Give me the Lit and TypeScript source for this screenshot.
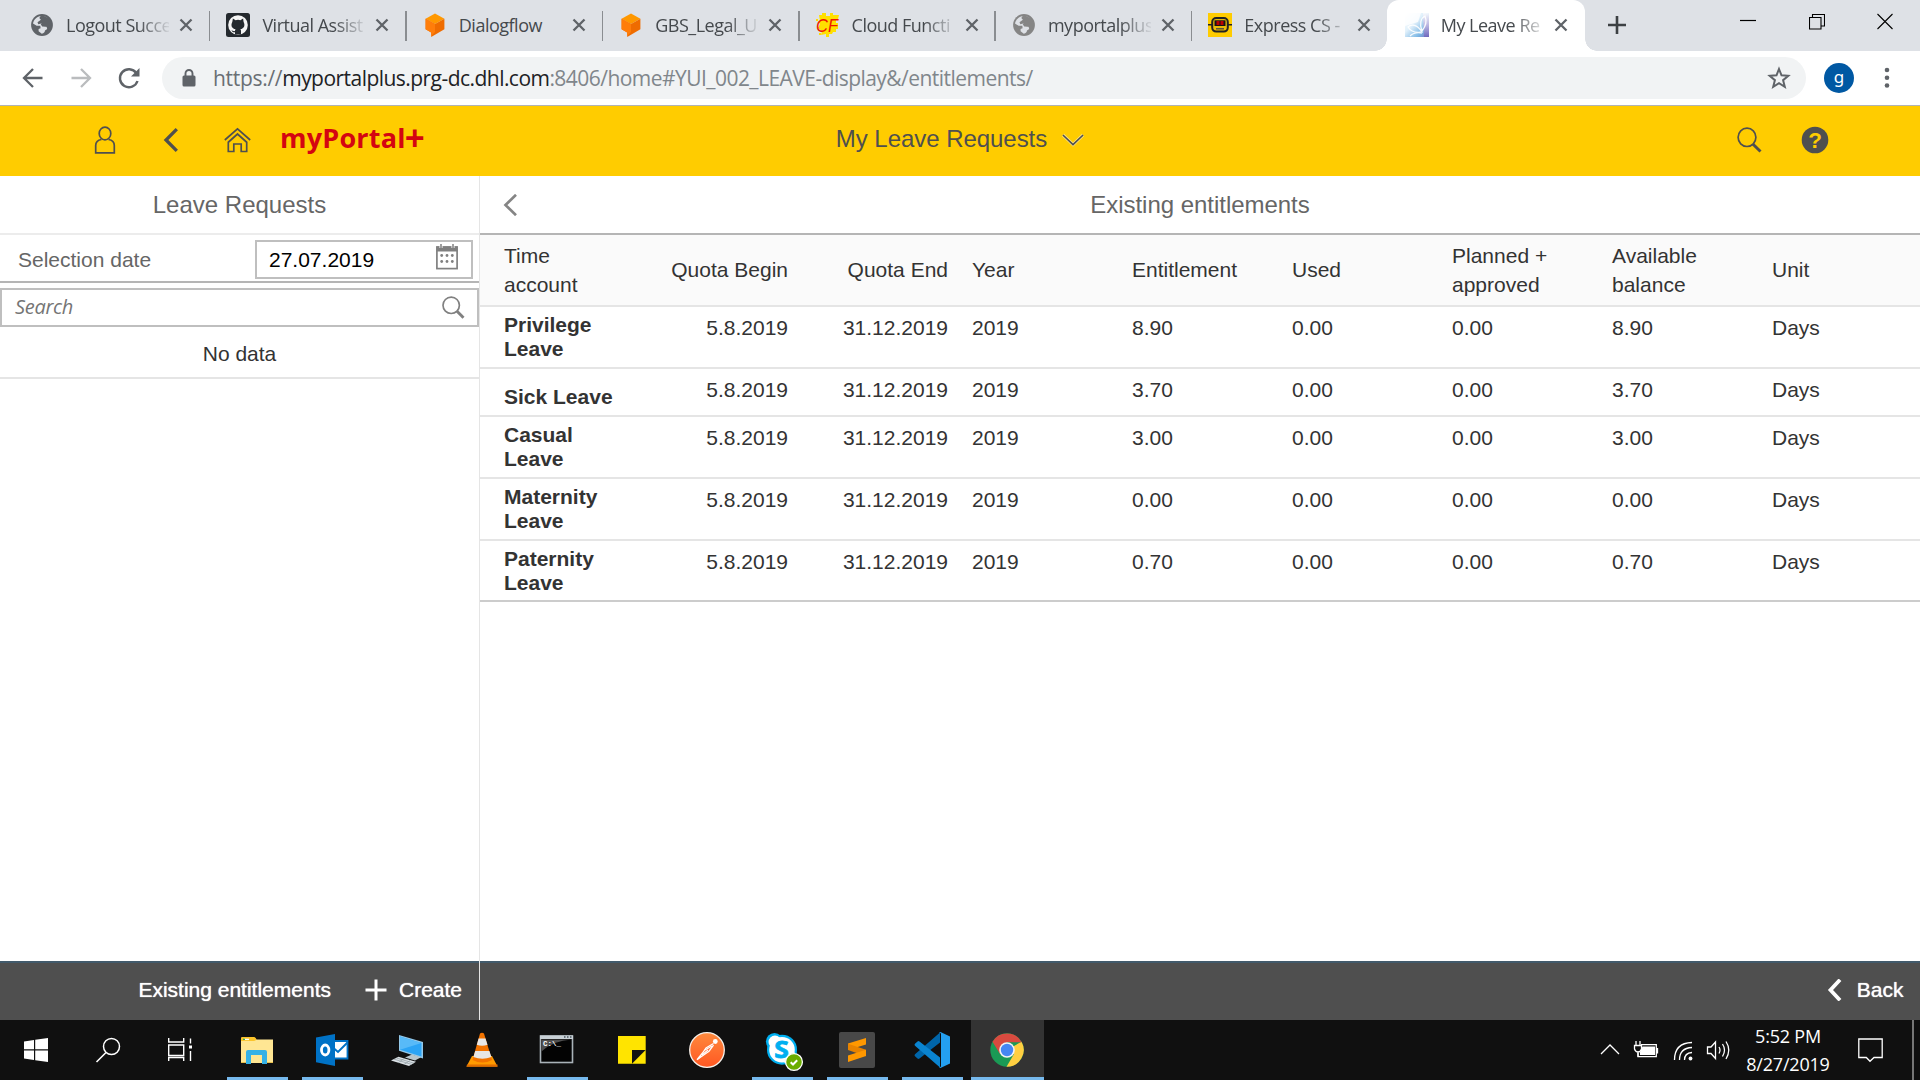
import { LitElement, html, svg, css, nothing } from "lit";
import { customElement } from "lit/decorators.js";
import { classMap } from "lit/directives/class-map.js";

const closeIcon = html`<svg class="x" width="14" height="14" viewBox="0 0 14 14"><path d="M1.5 1.5 12.5 12.5M12.5 1.5 1.5 12.5" stroke="#5f6368" stroke-width="2.3" fill="none"/></svg>`;

const globe = (color: string) => svg`
  <circle cx="12" cy="12" r="10.9" fill="${color}"/>
  <path d="M11.2 2.9C7 3.4 3.6 6.4 3 10.6l3.7 2.2h3.6l.3 2.5-2 .6v2.3l3.2 2.5c2.1-.4 3-1.3 3.2-3.1l2.2-1.5-.6-2.3-4.4-.4-1.5-2.2 1.8-1 2.8.4.6-2.3 3.2-1.6C17.6 4.3 15 3 11.2 2.9z" fill="#dee1e6"/>
  <path d="M11.5 1.8 9.3 5l1.6 1.8-3.4 2.4.8 2 3-.6 2.2 2.5 4.2.3.8 2.4-2.4 2.6 3.6-.9 2.2-5-1.5-6.4z" fill="${color}"/>`;

const dialogflow = svg`
  <path d="M12 .5 21.4 5.7 12 11 2.6 5.7z" fill="#ff9800"/>
  <path d="M2.6 5.7 12 11l9.4-5.3v10.6L8.2 24v-4.4L2.6 16.3z" fill="#ef6c00"/>
  <path d="M2.6 5.7 12 11v8l-3.8 4V19.600l-5.6-3.300z" fill="#ff7d0a"/>`;

const favicons: Record<string, unknown> = {
  globe: globe("#5f6368"),
  globeGray: globe("#858585"),
  github: svg`
    <rect width="24" height="24" rx="2.5" fill="#24292e"/>
    <circle cx="12" cy="12" r="9.8" fill="#f5f5f5"/>
    <path d="M6.900 5.500 9.600 7.200a9 9 0 0 1 4.800 0l2.700-1.700.5 3.400c1.800 3.300.6 6.700-3.300 7.200.6.700.7 1.300.7 2.200v3.300h-6v-2.400c-2 .3-2.900-.5-3.600-2 1.300 0 1.700 1.400 3.600.9 0-.9.200-1.500.6-2-3.900-.5-5.100-3.900-3.300-7.200z" fill="#24292e"/>`,
  dialogflow,
  cf: svg`
    <path d="M3 2h3V0h4v3h4V0h3v2h6l-1 4h-2v4h2v4h-2v5h-3l-1 2h-3v3h-3v-3l-5 1 1-4-4-3 2-4-2-3h2z" fill="#ffe000"/>
    <path d="M0 6h2v2H0zM20 14h2v2h-2zM3 20h2v2H3z" fill="#ffe000"/>
    <text x="0" y="19" font-family="Liberation Sans" font-size="19" fill="#f01800" textLength="22" lengthAdjust="spacingAndGlyphs" font-style="italic">CF</text>`,
  express: svg`
    <rect width="24" height="24" fill="#fc0"/>
    <path d="M0 11h24v1.500H0z" fill="#222"/>
    <rect x="4.200" y="5" width="15.600" height="13.600" rx="4" fill="#e9bb06" stroke="#222" stroke-width="2"/>
    <rect x="6.500" y="7.300" width="11" height="5.700" fill="#151515"/>
    <rect x="8.500" y="8" width="3" height="4" fill="#b00"/><rect x="12.500" y="8" width="3" height="4" fill="#b00"/>
    <path d="M8 15.800h8" stroke="#444" stroke-width="1.300"/>`,
  butterfly: svg`
    <defs>
      <linearGradient id="wing" x1="0" y1="0" x2="1" y2="1"><stop offset="0" stop-color="#fff"/><stop offset=".4" stop-color="#dff0fb"/><stop offset=".75" stop-color="#6fb0e2"/><stop offset="1" stop-color="#6a5fb8"/></linearGradient>
      <linearGradient id="edge" x1="0" y1="0" x2="0" y2="1"><stop offset="0" stop-color="#ffffff"/><stop offset=".5" stop-color="#cfb4e0"/><stop offset="1" stop-color="#6c62bb"/></linearGradient>
    </defs>
    <path d="M0 0h24v24H0z" fill="url(#wing)" opacity=".9"/>
    <path d="M18 0h6v24h-5z" fill="url(#edge)" opacity=".75"/>
    <path d="M0 0h16l-3 9-13 4z" fill="#fff" opacity=".8"/>
    <path d="M17 18C14 11 16 5 20 3c2 5 1 10-3 15zM17 19C12 11 6 11 3 14c3 5 8 6 14 5zM17 20c-5-1-9 0-12 3" fill="none" stroke="#fff" stroke-width="1.300" opacity=".9"/>`,
};

interface Tab { icon: string; label: string; active?: boolean; last?: boolean; }
const TABS: Tab[] = [
  { icon: "globe", label: "Logout Succe" },
  { icon: "github", label: "Virtual Assist" },
  { icon: "dialogflow", label: "Dialogflow" },
  { icon: "dialogflow", label: "GBS_Legal_U" },
  { icon: "cf", label: "Cloud Functi" },
  { icon: "globeGray", label: "myportalplus" },
  { icon: "express", label: "Express CS -", last: true },
  { icon: "butterfly", label: "My Leave Re", active: true },
];

@customElement("browser-chrome")
class BrowserChrome extends LitElement {
  static styles = css`
    :host { display: block; font-family: "Open Sans", "Noto Sans", sans-serif; }
    .strip { display: flex; height: 51px; background: #dee1e6; padding-left: 13px; box-sizing: border-box; }
    .tab { flex: none; width: 196.400px; height: 51px; box-sizing: border-box; display: flex; align-items: center; padding: 0 0 1px 17px; position: relative; }
    .tab svg { flex: none; }
    .tab::after { content: ""; position: absolute; right: -1px; top: 11px; width: 1.500px; height: 30px; background: #8a8d91; }
    .tab.plain::after { display: none; }
    .tab.active { background: #fff; border-radius: 12px 12px 0 0; width: 198px; margin-left: -1px; padding-left: 18px; }
    .tab.active::before { content: ""; position: absolute; left: -12px; bottom: 0; width: 12px; height: 12px; background: radial-gradient(circle at 0 0, transparent 11.500px, #fff 12px); }
    .tab.active::after { right: -12px; top: auto; bottom: 0; width: 12px; height: 12px; background: radial-gradient(circle at 100% 0, transparent 11.500px, #fff 12px); }
    .label { width: 103px; margin-left: 12px; margin-top: -1px; font-size: 18px; line-height: 24px; letter-spacing: -.5px; color: #45494d; white-space: nowrap; overflow: hidden; -webkit-mask-image: linear-gradient(90deg, #000 72px, transparent 106px); mask-image: linear-gradient(90deg, #000 72px, transparent 106px); }
    .label.full { -webkit-mask-image: none; mask-image: none; }
    .x { margin-left: 10px; }
    .new { margin: 15.500px 0 0 23.500px; }
    .win { margin-left: auto; display: flex; gap: 52.500px; padding: 13px 27px 0 0; }
    .bar { height: 54px; display: flex; align-items: center; background: #fff; }
    .bar svg { flex: none; }
    .nav { display: flex; align-items: center; gap: 24px; padding: 0 21px 0 21px; width: 120px; }
    .omni { flex: none; width: 1644px; height: 42px; border-radius: 21px; background: #f1f3f4; box-sizing: border-box; display: flex; align-items: center; padding: 0 15px 0 20px; }
    .url { margin-left: 17px; font-size: 21px; line-height: 30px; letter-spacing: -.54px; color: #80868b; white-space: pre; flex: 1; }
    .url b { font-weight: 400; color: #202124; }
    .url i { font-style: normal; color: #6a6f74; letter-spacing: -.3px; }
    .avatar { width: 30px; height: 30px; margin-left: 18px; border-radius: 50%; background: #0058a3; color: #fff; text-align: center; font-size: 17px; line-height: 27px; font-family: "Noto Sans", sans-serif; }
    .dots { margin-left: 30px; }
    .edge { height: 1px; background: #b0b3b5; }
  `;
  render() {
    return html`
      <div class="strip">
        ${TABS.map((t) => html`
          <div class=${classMap({ tab: true, active: !!t.active, plain: !!t.last })}>
            <svg width="24" height="24" viewBox="0 0 24 24">${favicons[t.icon]}</svg>
            <span class=${classMap({ label: true, full: t.label === "Dialogflow" })}>${t.label}</span>
            ${closeIcon}
          </div>`)}
        <svg class="new" width="18" height="18" viewBox="0 0 18 18"><path d="M9 0v18M0 9h18" stroke="#3c4043" stroke-width="2.600"/></svg>
        <div class="win">
          <svg width="16" height="17" viewBox="0 0 16 17"><path d="M0 7.500h16" stroke="#000" stroke-width="1.200"/></svg>
          <svg width="16" height="17" viewBox="0 0 16 17"><path d="M.5 4.500h11.500v11.500H.5zM3.500 4.500V1.500h12v11.500h-3.500" fill="none" stroke="#000" stroke-width="1.100"/></svg>
          <svg width="16" height="17" viewBox="0 0 16 17"><path d="M.5 1 15.500 16M15.500 1 .5 16" stroke="#000" stroke-width="1.100"/></svg>
        </div>
      </div>
      <div class="bar">
        <div class="nav">
          <svg width="24" height="24" viewBox="0 0 24 24"><path d="M21.500 12H3.500M12 3 3 12l9 9" fill="none" stroke="#5f6368" stroke-width="2.300"/></svg>
          <svg width="24" height="24" viewBox="0 0 24 24"><path d="M2.500 12h18M12 3l9 9-9 9" fill="none" stroke="#babcbe" stroke-width="2.300"/></svg>
          <svg width="24" height="24" viewBox="0 0 24 24"><path d="M19.300 7A9 9 0 1 0 20.500 15" fill="none" stroke="#5f6368" stroke-width="2.400"/><path d="M22.500 2v8.500H14z" fill="#5f6368"/></svg>
        </div>
        <div class="omni">
          <svg width="14" height="18" viewBox="0 0 14 18"><rect x=".5" y="6.500" width="13" height="11" rx="1.500" fill="#5f6368"/><path d="M3.500 8V4.500a3.500 3.500 0 0 1 7 0V8" fill="none" stroke="#5f6368" stroke-width="1.900"/></svg>
          <span class="url"><i>https://</i><b>myportalplus.prg-dc.dhl.com</b>:8406/home#YUI_002_LEAVE-display&amp;/entitlements/</span>
          <svg width="24" height="24" viewBox="0 0 24 24"><path d="M12 3l2.500 6.300 6.800.5-5.200 4.400 1.700 6.600L12 17.200l-5.800 3.600 1.700-6.600-5.200-4.400 6.800-.5z" fill="none" stroke="#5f6368" stroke-width="2"/></svg>
        </div>
        <div class="avatar">g</div>
        <svg class="dots" width="6" height="22" viewBox="0 0 6 22"><g fill="#5f6368"><circle cx="3" cy="3" r="2.300"/><circle cx="3" cy="10.800" r="2.300"/><circle cx="3" cy="18.500" r="2.300"/></g></svg>
      </div>
      <div class="edge"></div>`;
  }
}

@customElement("portal-header")
class PortalHeader extends LitElement {
  static styles = css`
    :host { display: grid; grid-template-columns: 1fr auto 1fr; align-items: center; height: 70px; background: #fc0; color: #4f4f4f; font-family: "Liberation Sans", Arial, sans-serif; }
    .left { display: flex; align-items: center; padding: 0 0 2px 94px; }
    .left svg { flex: none; }
    .back { margin-left: 47px; }
    .home { margin-left: 45px; }
    .logo { display: flex; align-items: baseline; margin: 0 0 6px 29px; font: 700 27px/34px "Open Sans", "Noto Sans", sans-serif; letter-spacing: .2px; color: #d40511; }
    .plus { font-size: 35px; line-height: 30px; margin-left: -1px; transform: translateY(3px); }
    .title { display: flex; align-items: center; gap: 15px; font-size: 24px; line-height: 30px; padding-bottom: 5px; letter-spacing: -.04px; }
    .title svg { margin-top: 2px; }
    .right { display: flex; justify-content: flex-end; align-items: center; gap: 39px; padding: 0 91px 2px 0; }
  `;
  render() {
    return html`
      <div class="left">
        <svg width="22" height="28" viewBox="0 0 22 28"><g fill="none" stroke="#4f4f4f" stroke-width="1.700"><ellipse cx="11" cy="7.500" rx="5.800" ry="6.300"/><path d="M7.500 13.500C4 14 1.700 16 1.700 19.500V26.800h18.600v-7.300c0-3.500-2.300-5.500-5.800-6"/></g></svg>
        <svg class="back" width="16" height="24" viewBox="0 0 16 24"><path d="M13.800 1.200 3 12l10.800 10.800" fill="none" stroke="#4f4f4f" stroke-width="3.300"/></svg>
        <svg class="home" width="27" height="26" viewBox="0 0 27 26"><g fill="none" stroke="#4f4f4f" stroke-width="1.700"><path d="M.8 13 13.500 1.800 26.200 13M4 15.500 13.500 7 23 15.500M4.300 15v9.500h5.500v-7.500h7.400v7.500h5.500V15"/></g></svg>
        <div class="logo">myPortal<span class="plus">+</span></div>
      </div>
      <div class="title">My Leave Requests
        <svg width="22" height="14" viewBox="0 0 24 14"><path d="M1 1.500 12 12 23 1.500" fill="none" stroke="#f7e08a" stroke-width="3.500"/><path d="M1 1.500 12 12 23 1.500" fill="none" stroke="#4f4f4f" stroke-width="1.700"/></svg>
      </div>
      <div class="right">
        <svg width="25" height="26" viewBox="0 0 25 26"><ellipse cx="10" cy="10.300" rx="8.900" ry="9.200" fill="none" stroke="#4f4f4f" stroke-width="1.700"/><path d="M15.800 17 23.500 24.500" stroke="#4f4f4f" stroke-width="3"/></svg>
        <svg width="28" height="28" viewBox="0 0 28 28"><circle cx="14" cy="14" r="13.300" fill="#4f4f4f"/><text x="14" y="21.800" text-anchor="middle" font-family="Liberation Sans" font-weight="700" font-size="22.500" fill="#fc0">?</text></svg>
      </div>`;
  }
}

@customElement("leave-list")
class LeaveList extends LitElement {
  static styles = css`
    :host { display: flex; flex-direction: column; width: 480px; height: 844px; box-sizing: border-box; border-right: 1px solid #e5e5e5; font-family: "Liberation Sans", Arial, sans-serif; background: #fff; }
    .head { height: 59px; box-sizing: border-box; border-bottom: 2px solid #ececec; text-align: center; font-size: 24px; line-height: 57px; color: #666; }
    .select { height: 48px; box-sizing: border-box; border-bottom: 2px solid #b5b5b5; display: flex; align-items: center; padding: 0 6px 0 18px; font-size: 21px; color: #666; }
    .select label { flex: 1; padding-top: 3px; }
    .date { width: 218px; height: 39px; box-sizing: border-box; border: 2px solid #bfbfbf; display: flex; justify-content: space-between; padding: 0 13px 0 12px; color: #000; line-height: 35px; margin-top: 2px; }
    .date svg { margin-top: 2px; }
    .search { margin-top: 5px; height: 39px; box-sizing: border-box; border: 2px solid #bfbfbf; display: flex; justify-content: space-between; align-items: center; padding: 0 12px 0 13px; font: italic 20px/34px "Open Sans", sans-serif; letter-spacing: -.3px; color: #757575; }
    .search span { padding-bottom: 2px; }
    .empty { height: 52px; box-sizing: border-box; border-bottom: 2px solid #e5e5e5; text-align: center; font-size: 21px; line-height: 54px; color: #333; }
    .foot { margin-top: auto; height: 59px; box-sizing: border-box; border-top: 2px solid #425a6b; background: #4f4f4f; color: #fff; display: flex; align-items: center; font-size: 21px; padding: 0 17px 3px 0; justify-content: flex-end; text-shadow: 0 0 1px #fff; }
    .foot svg { margin: 0 12px 0 34px; }
  `;
  render() {
    const dots = [0, 1, 2].flatMap((c) => [0, 1].map((r) => svg`<circle cx="${5.700 + c * 5.300}" cy="${11.500 + r * 6}" r="1.400" fill="#808080"/>`));
    return html`
      <div class="head">Leave Requests</div>
      <div class="select"><label>Selection date</label>
        <div class="date">27.07.2019
          <svg width="22" height="26" viewBox="0 0 22 26"><rect x=".9" y="3" width="20.200" height="21.600" fill="none" stroke="#808080" stroke-width="1.700"/><path d="M.5 2.500h21v5H.5z" fill="#808080"/><path d="M5 0v4M17 0v4" stroke="#fff" stroke-width="3"/><path d="M5 0v4M17 0v4" stroke="#808080" stroke-width="1.500"/>${dots}</svg>
        </div>
      </div>
      <div class="search"><span>Search</span>
        <svg width="23" height="23" viewBox="0 0 23 23"><circle cx="9.200" cy="9.300" r="8.200" fill="none" stroke="#808080" stroke-width="1.700"/><path d="M14.800 15 21.500 21.800" stroke="#808080" stroke-width="2.900"/></svg>
      </div>
      <div class="empty">No data</div>
      <div class="foot">Existing entitlements
        <svg width="22" height="22" viewBox="0 0 22 22"><path d="M11 .5v21M.5 11h21" stroke="#fff" stroke-width="3"/></svg>Create
      </div>`;
  }
}

interface Entitlement { name: string; entitlement: string; balance: string; single?: boolean; last?: boolean; }
const ROWS: Entitlement[] = [
  { name: "Privilege Leave", entitlement: "8.90", balance: "8.90" },
  { name: "Sick Leave", entitlement: "3.70", balance: "3.70", single: true },
  { name: "Casual Leave", entitlement: "3.00", balance: "3.00" },
  { name: "Maternity Leave", entitlement: "0.00", balance: "0.00" },
  { name: "Paternity Leave", entitlement: "0.70", balance: "0.70", last: true },
];

@customElement("entitlement-table")
class EntitlementTable extends LitElement {
  static styles = css`
    :host { display: flex; flex-direction: column; flex: 1; height: 844px; font-family: "Liberation Sans", Arial, sans-serif; background: #fff; }
    .head { height: 59px; box-sizing: border-box; border-bottom: 2px solid #b5b5b5; display: grid; grid-template-columns: 60px 1fr 60px; align-items: center; font-size: 24px; line-height: 57px; letter-spacing: -.03px; color: #666; text-align: center; }
    .head svg { margin-left: 22px; margin-top: 1px; }
    .row { display: grid; grid-template-columns: repeat(9, 160px); height: 62px; box-sizing: border-box; border-bottom: 2px solid #e5e5e5; font-size: 21px; line-height: 24px; color: #333; padding-top: 9px; }
    .row > span { padding: 0 12px; }
    .row > span:first-child { padding-left: 24px; }
    .row > .r { text-align: right; }
    .cols { height: 72px; padding-top: 0; align-items: center; background: #fafafa; line-height: 29.300px; }
    .name { font-weight: 700; margin-top: -3px; }
    .single { height: 48px; }
    .single .name { margin-top: 7px; }
    .last { height: 61px; border-color: #ccc; }
    .foot { margin-top: auto; height: 59px; box-sizing: border-box; border-top: 2px solid #425a6b; background: #4f4f4f; color: #fff; display: flex; justify-content: flex-end; align-items: center; gap: 14px; font-size: 21px; padding: 0 16.500px 3px 0; text-shadow: 0 0 1px #fff; }
  `;
  render() {
    return html`
      <div class="head">
        <svg width="18" height="22" viewBox="0 0 18 22"><path d="M14 .8 3.500 11 14 21.200" fill="none" stroke="#858585" stroke-width="2.700"/></svg>
        <span>Existing entitlements</span>
      </div>
      <div class="row cols">
        <span>Time<br>account</span><span class="r">Quota Begin</span><span class="r">Quota End</span><span>Year</span><span>Entitlement</span><span>Used</span><span>Planned + approved</span><span>Available balance</span><span>Unit</span>
      </div>
      ${ROWS.map((r) => html`
        <div class=${classMap({ row: true, single: !!r.single, last: !!r.last })}>
          <span class="name">${r.single ? r.name : html`${r.name.split(" ")[0]}<br>${r.name.split(" ")[1]}`}</span><span class="r">5.8.2019</span><span class="r">31.12.2019</span><span>2019</span><span>${r.entitlement}</span><span>0.00</span><span>0.00</span><span>${r.balance}</span><span>Days</span>
        </div>`)}
      <div class="foot"><svg width="16" height="22" viewBox="0 0 16 22"><path d="M13 .8 3.500 11 13 21.200" fill="none" stroke="#fff" stroke-width="3.800"/></svg>Back</div>`;
  }
}

interface App { art: unknown; running?: boolean; active?: boolean; }
const APPS: App[] = [
  { running: true, art: svg`
    <path d="M20 18.500q0-1.500 1.500-1.500h11l3 2.500H52v23.500H20z" fill="#ffe693"/>
    <path d="M20 20.500V18.500q0-1.500 1.500-1.500h11q2 0 3 2.300-1 1.700-3 1.700H20z" fill="#fbc42a"/>
    <path d="M23 19.400h5" stroke="#fff" stroke-width="1.400"/><path d="M22 19.400h2" stroke="#39b54a" stroke-width="1.400"/>
    <path d="M25 44V32q0-2 2-2h17q2 0 2 2v12h-5v-9H30v9z" fill="#35b1e6"/><path d="M20 42h5v1H20zM46 42h6v1h-6z" fill="#e8bf4d"/>` },
  { running: true, art: svg`
    <path d="M38 21h13.500v17.500H38z" fill="#fff" stroke="#0072c6" stroke-width="1.800"/>
    <path d="M38 28.500l4 3.500 9.500-9.500" fill="none" stroke="#0072c6" stroke-width="2"/>
    <path d="M20 17.500 39 14v32l-19-3.700z" fill="#0072c6"/>
    <ellipse cx="29.200" cy="30" rx="3.700" ry="5" fill="none" stroke="#fff" stroke-width="2.800"/>` },
  { art: svg`
    <path d="M28 15 52 22v16.500L28 30.700z" fill="#94c8e8"/><path d="M29 16.500 50.500 23v13.500L29 29.700z" fill="#2ca4f5"/><path d="M29 16.500 50.500 23 29 29.700z" fill="#58baf8"/>
    <path d="M34 37.500 41 34.500l9 2.700-6 3.300z" fill="#b9c6cc"/><path d="M20 40.500 27.500 36.700 45 41.700 38 46z" fill="#dce2e6"/><path d="M23 39.200 41 44.500M25.500 38 43 43.200M27 43l6-4.500M33 44.500l6-4" stroke="#8d999f" stroke-width=".7"/>` },
  { art: svg`
    <path d="M26 36h20l5.500 10.500h-31z" fill="#ff9a00"/><path d="M21 44.500h30.500v2.200H20.500z" fill="#e06d00"/>
    <path d="M34 13.500q2-1.500 4 0L46 40q-9.500 5-19.500 0z" fill="#f27300"/>
    <path d="M32.600 18.500h6.900l2 6.300q-5.400 2-10.700 0zM29.200 31h14.200l2 6q-9 3.500-18 0z" fill="#e7e7e7"/>` },
  { running: true, art: svg`
    <rect x="19.500" y="16" width="32" height="26.500" fill="#030303" stroke="#a9b2b8" stroke-width="1.600"/>
    <path d="M19 15.500h33V19H19z" fill="#c8d0d6"/><path d="M43 17h1.500M46 17h1.500M49 17h1.500" stroke="#44505a" stroke-width="1.300"/>
    <path d="M20.500 19.500h30q-18 1-30 12z" fill="#4e4e4e"/>
    <text x="22" y="26" font-family="Liberation Mono" font-weight="700" font-size="7.500" fill="#fff">C:\\_</text>` },
  { art: svg`<path d="M22 16h27.700v14l-13.700 13.700H22z" fill="#ffe400"/><path d="M36 30h13.700L36 43.700z" fill="#111"/><path d="M49.700 30v13.700H36z" fill="#ffe400"/>` },
  { art: svg`
    <defs><linearGradient id="pm" x1="0" y1="0" x2="0" y2="1"><stop offset="0" stop-color="#ff8a3d"/><stop offset="1" stop-color="#ff5722"/></linearGradient></defs>
    <circle cx="36" cy="30" r="17.300" fill="url(#pm)" stroke="#f5f0ea" stroke-width="1.300"/>
    <circle cx="44.300" cy="21.500" r="2.400" fill="#fff"/><path d="M42.500 23.500 35 28l-3.500 5L26 39.700l7-5 5-3.500 4.500-6" fill="#ff6c37" stroke="#fff" stroke-width="1.300"/><path d="M34 30 41 26M31 35l6-5" stroke="#fff" stroke-width="1.200"/>` },
  { running: true, art: svg`
    <circle cx="28.500" cy="21.500" r="8.600" fill="#00aff0"/><circle cx="43" cy="37" r="8.500" fill="#00aff0"/><circle cx="36" cy="29.700" r="15" fill="#00aff0"/>
    <circle cx="29" cy="22" r="6.500" fill="#fff"/><circle cx="42" cy="36" r="7.500" fill="#fff"/><circle cx="36" cy="29.700" r="12.800" fill="#fff"/>
    <text x="35.500" y="38" text-anchor="middle" font-family="Open Sans" font-weight="700" font-size="23" fill="#00aff0" stroke="#00aff0" stroke-width=".8" textLength="14.500" lengthAdjust="spacingAndGlyphs">S</text>
    <circle cx="48" cy="42" r="8.400" fill="#6bad00" stroke="#fff" stroke-width="1.300"/><path d="M44.700 42.200 47 44.500l4.200-4.300" fill="none" stroke="#fff" stroke-width="2"/>` },
  { running: true, art: svg`
    <rect x="18" y="12" width="36" height="36" rx="2" fill="#484848"/>
    <path d="M27 23.500 45 18v6.500L27 30z" fill="#ff9800"/><path d="M27 23.800 45 29.800v6.500L27 30z" fill="#e88300"/><path d="M27 35.500 45 29.800v6.300L27 42z" fill="#ff9800"/>` },
  { running: true, art: svg`
    <path d="M44 12.500v10L23.500 38.500q-1 .8-2 0l-2.500-2.200q-1-1 0-2z" fill="#0065a9"/>
    <path d="M44 47.500v-10L23.500 21.500q-1-.8-2 0L19 23.700q-1 1 0 2z" fill="#0a84d0"/>
    <path d="M44.500 12 54 16.500v27L44.500 48q-1 0-1.500-1 1.500 1 2-1V14q-.5-2-2-1 .5-1 1.500-1z" fill="#24a0f0"/>` },
  { running: true, active: true, art: svg`
    <circle cx="36" cy="30" r="16.700" fill="#1a9a55"/>
    <path d="M36 30 50.500 21.700A16.700 16.700 0 0 1 35.500 46.700L43 34z" fill="#ffcf41"/>
    <path d="M21.500 21.700A16.700 16.700 0 0 1 50.700 22.300H36L29 34z" fill="#d94a3f"/>
    <circle cx="36" cy="30" r="7.800" fill="#f3f3f3"/><circle cx="36" cy="30" r="6.200" fill="#4587f3"/>` },
];

@customElement("task-bar")
class TaskBar extends LitElement {
  static styles = css`
    :host { display: flex; height: 60px; background: #101010; font-family: "Open Sans", "Noto Sans", sans-serif; }
    svg { display: block; flex: none; }
    .apps { display: flex; gap: 2px; padding-left: 5px; }
    .app { width: 73px; height: 60px; position: relative; }
    .app.active { background: #333; }
    .app.running::after { content: ""; position: absolute; left: 6px; right: 6px; bottom: 0; height: 3px; background: #76b9ed; }
    .app.active::after { left: 0; right: 0; }
    .tray { margin-left: auto; display: flex; align-items: center; }
    .clock { width: 86px; margin: 0 27px 0 15px; color: #fff; text-align: center; font-size: 18px; line-height: 28px; letter-spacing: -.2px; white-space: nowrap; }
    .peek { width: 6px; height: 60px; margin-left: 29px; border-left: 2px solid #777; }
  `;
  render() {
    return html`
      <svg width="72" height="60" viewBox="0 0 72 60"><path d="M24 21.500 34 20v9.300H24zM35.200 19.800 48 18v11.300H35.200zM24 30.600h10V40l-10-1.500zM35.200 30.600H48V42l-12.800-1.800z" fill="#fff"/></svg>
      <svg width="72" height="60" viewBox="0 0 72 60"><circle cx="39.500" cy="26.500" r="8" fill="none" stroke="#fff" stroke-width="1.500"/><path d="M34 32.500 24.500 42" stroke="#fff" stroke-width="1.600"/></svg>
      <svg width="72" height="60" viewBox="0 0 72 60"><g fill="none" stroke="#fff" stroke-width="1.400"><path d="M24.700 18v4h15v-4M24.700 25h15v10.500h-15zM24.700 41v-3.500h15V41M46.500 18.500v5M46.500 31v10"/></g><path d="M45 25.500h3v3h-3z" fill="#fff"/></svg>
      <div class="apps">
        ${APPS.map((a) => html`<div class=${classMap({ app: true, running: !!a.running, active: !!a.active })}><svg width="73" height="60" viewBox="0 0 73 60">${a.art ?? nothing}</svg></div>`)}
      </div>
      <div class="tray">
        <svg width="132" height="60" viewBox="1598 0 132 60">
          <g fill="none" stroke="#fff" stroke-width="1.300">
            <path d="M1601 34 1610 25l9 9"/>
            <path d="M1641 24.700h15.300v12H1638v-4M1657.500 28v5.500"/>
            <path d="M1636 21v4M1640 21v4M1634.500 25.500h7v3.500q-1 3-3.500 3t-3.500-3zM1638 32v4.700"/>
            <path d="M1674.500 40q0-17 17.500-17.500M1679.500 40q0-12 12.500-12.500M1684.500 40q0-7 7.500-7.500"/>
            <path d="M1707.500 27v6.500h3.500l4.500 5V22l-4.500 5zM1719 27q2 3 0 6.500M1722.500 24q4 6 0 12.500M1726 21.500q5.500 8.500 0 17.500"/>
          </g>
          <path d="M1642.500 26.500h12.500v8.500h-15v-3z" fill="#fff"/><circle cx="1690.500" cy="38.500" r="1.900" fill="#fff"/>
        </svg>
        <div class="clock">5:52 PM<br>8/27/2019</div>
        <svg width="25" height="26" viewBox="0 0 25 26"><path d="M.8 2h23.400v18.500H16L12 24.300 8.300 20.500H.8z" fill="none" stroke="#fff" stroke-width="1.300"/></svg>
        <div class="peek"></div>
      </div>`;
  }
}

@customElement("app-root")
class AppRoot extends LitElement {
  static styles = css`
    :host { display: flex; flex-direction: column; width: 1920px; height: 1080px; overflow: hidden; background: #fff; }
    .main { display: flex; height: 844px; }
  `;
  render() {
    return html`
      <browser-chrome></browser-chrome>
      <portal-header></portal-header>
      <div class="main"><leave-list></leave-list><entitlement-table></entitlement-table></div>
      <task-bar></task-bar>`;
  }
}
